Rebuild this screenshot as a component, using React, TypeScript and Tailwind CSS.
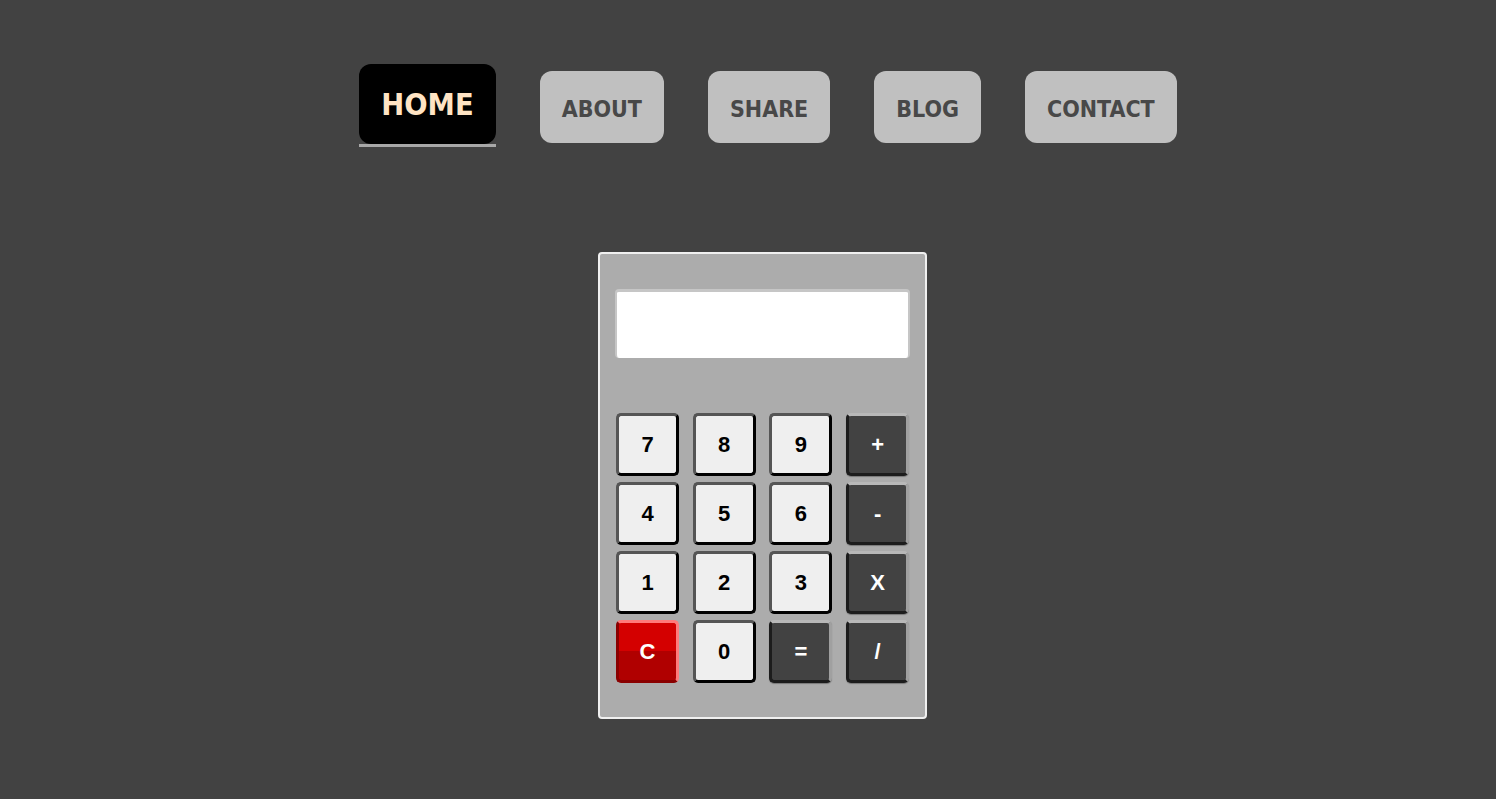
import React from "react";

const navFont = { fontFamily: "'DejaVu Sans Condensed', 'DejaVu Sans', sans-serif" };

function NumKey({ label }: { label: string }) {
  return (
    <button className="w-[63px] h-[63px] rounded-[5px] bg-[#efefef] border-[3px] border-t-[#555] border-l-[#555] border-r-black border-b-black flex items-center justify-center text-[22px] font-bold text-black font-['Liberation_Sans',Arial,sans-serif]">
      {label}
    </button>
  );
}

function OpKey({ label }: { label: string }) {
  return (
    <button className="w-[63px] h-[63px] rounded-[5px] bg-[#424242] border-[3px] border-t-[#b8b8b8] border-r-[#a0a0a0] border-l-[#1c1c1c] border-b-[#1c1c1c] shadow-[0_1px_1px_rgba(0,0,0,0.3)] flex items-center justify-center text-[22px] font-bold text-white font-['Liberation_Sans',Arial,sans-serif]">
      {label}
    </button>
  );
}

function ClearKey() {
  return (
    <button className="w-[63px] h-[63px] rounded-[5px] bg-[linear-gradient(to_bottom,#d40000_0%,#d40000_50%,#b00000_50%,#b00000_100%)] border-[3px] border-t-[#ff7a7a] border-r-[#ff7a7a] border-l-[#8a0000] border-b-[#8a0000] flex items-center justify-center text-[22px] font-bold text-white font-['Liberation_Sans',Arial,sans-serif]">
      C
    </button>
  );
}

export default function App() {
  const navItems = ["ABOUT", "SHARE", "BLOG", "CONTACT"];
  return (
    <div className="min-h-screen w-full bg-[#424242] overflow-hidden">
      <ul className="flex justify-center items-start pl-10 pt-16 gap-[44px]" style={navFont}>
        <li className="flex flex-col">
          <a className="h-[80px] px-[22px] rounded-[12px] bg-black flex items-center justify-center text-[30.5px] font-bold text-[#ffe4c4] leading-none pt-[3px]">
            HOME
          </a>
          <div className="h-[3px] bg-[#a8a8a8]" />
        </li>
        {navItems.map((n) => (
          <li key={n} className="mt-[7px]">
            <a className="h-[72px] px-[22px] rounded-[12px] bg-[#c0c0c0] flex items-center justify-center text-[23px] font-bold text-[#484848] leading-none pt-[4px]">
              {n}
            </a>
          </li>
        ))}
      </ul>

      <div className="flex justify-center pl-[29px] mt-[105px]">
        <div className="w-[329px] h-[467px] rounded-[4px] border-2 border-[#f0f0f0] bg-[#acacac] px-[15px] pt-[35px]">
          <div className="h-[69px] w-full rounded-[4px] bg-white border-t-[3px] border-x-[2px] border-b-0 border-[#c6c6c6]" />
          <div className="mt-[55px] ml-[1px] grid grid-cols-[repeat(4,63px)] gap-x-[13.7px] gap-y-[6px]">
            <NumKey label="7" />
            <NumKey label="8" />
            <NumKey label="9" />
            <OpKey label="+" />
            <NumKey label="4" />
            <NumKey label="5" />
            <NumKey label="6" />
            <OpKey label="-" />
            <NumKey label="1" />
            <NumKey label="2" />
            <NumKey label="3" />
            <OpKey label="X" />
            <ClearKey />
            <NumKey label="0" />
            <OpKey label="=" />
            <OpKey label="/" />
          </div>
        </div>
      </div>
    </div>
  );
}
